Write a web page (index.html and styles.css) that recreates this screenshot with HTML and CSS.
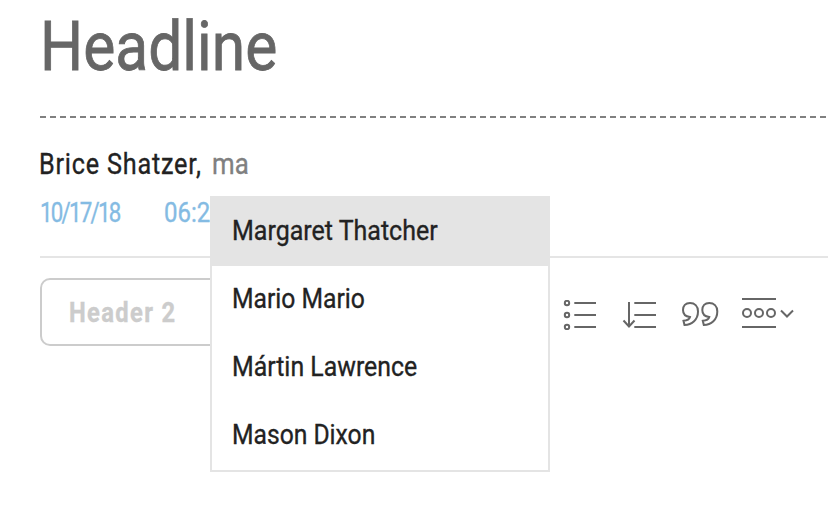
FILE: index.html
```html
<!DOCTYPE html>
<html lang="en">
<head>
<meta charset="utf-8">
<title>Article editor</title>
<link rel="stylesheet" href="styles.css">
</head>
<body>
<main class="editor">
  <h1 class="headline"><span class="text">Headline</span></h1>
  <div class="rule-dashed"></div>
  <div class="authors">
    <span class="text author">Brice Shatzer,</span>
    <span class="text query">ma</span>
    <ul class="menu">
      <li class="item active"><span class="text margaret">Margaret Thatcher</span></li>
      <li class="item"><span class="text mario">Mario Mario</span></li>
      <li class="item"><span class="text martin">Mártin Lawrence</span></li>
      <li class="item"><span class="text mason">Mason Dixon</span></li>
    </ul>
  </div>
  <div class="published"><span class="text date">10/17/18</span><span class="text time">06:28</span></div>
  <div class="toolbar">
    <div class="select"><span class="text style-name">Header 2</span></div>
    <div class="tools">
      <svg class="list" width="34" height="30" viewBox="563 300 34 30"><circle cx="567" cy="303" r="2.2"/><circle cx="567" cy="315" r="2.2"/><circle cx="567" cy="327" r="2.2"/><path d="M574.3 303H596M574.3 315H596M574.3 327H596"/></svg>
      <svg class="sort" width="36" height="30" viewBox="622 300 36 30"><path d="M634.3 303H656M634.3 315H656M634.3 327H656M629 302V327M623.5 320.5L629 326.500L634.5 320.500"/></svg>
      <svg class="quote" width="40" height="30" viewBox="680 300 40 30"><path id="q" d="M690 303C685.500 303 683 306 683 310C683 314 685.500 316.500 690 317C689.500 319 687 320.500 683.500 320.800L684.500 325C692 325 698 319.500 698 311.500C698 306 694.500 303 690 303Z"/><use href="#q" x="19.300"/></svg>
      <svg class="more" width="54" height="32" viewBox="741 297 54 32"><path d="M742 299H776M742 327H776M781 310.500L787 316.500L793 310.500"/><circle cx="747" cy="313" r="4"/><circle cx="759" cy="313" r="4"/><circle cx="771" cy="313" r="4"/></svg>
    </div>
  </div>
</main>
</body>
</html>
```
FILE: styles.css
```css
* { box-sizing: border-box; }
body {
  min-height: 100vh;
  margin: 0;
  background: #fff;
  color: #222;
  font-family: Roboto, "Liberation Sans", sans-serif;
}
.editor { min-height: 100vh; padding-left: 40px; overflow: hidden; }
.text {
  display: inline-block;
  white-space: nowrap;
  transform-origin: 0 50%;
  -webkit-text-stroke: .35px currentColor;
}
.headline {
  height: 116px;
  margin: 0;
  padding-top: 1px;
  font-size: 69px;
  font-weight: 400;
  line-height: 92px;
  color: #666;
}
.headline .text {
  transform: scaleX(.877);
  -webkit-text-stroke-width: .8px;
}
.rule-dashed {
  height: 2px;
  background: repeating-linear-gradient(90deg, #808080 0 6px, transparent 6px 10px);
}
.authors {
  position: relative;
  display: flex;
  height: 72px;
  padding-top: 22px;
  font-size: 29px;
  line-height: 48px;
}
.author { width: 172px; margin-left: -1px; letter-spacing: .900px; transform: scaleX(.87); }
.query { margin-left: 1px; color: #808080; transform: scaleX(.89); }
.menu {
  position: absolute;
  z-index: 2;
  top: 78px;
  left: 170px;
  width: 340px;
  height: 276px;
  margin: 0;
  padding: 0;
  border: 2px solid #e4e4e4;
  background: #fff;
  list-style: none;
  font-size: 28.500px;
}
.item { height: 68px; padding-left: 20px; line-height: 66px; }
.margaret { transform: scaleX(.877); }
.mario { transform: scaleX(.866); }
.martin { transform: scaleX(.872); }
.mason { transform: scaleX(.865); }
.active { background: #e4e4e4; }
.published {
  display: flex;
  height: 68px;
  border-bottom: 2px solid #e5e5e5;
  color: #84bbe3;
  font-size: 27px;
  line-height: 46px;
}
.date { width: 124px; letter-spacing: -2.100px; transform: scaleX(.825); }
.time { transform: scaleX(.89); }
.toolbar { display: flex; padding-top: 20px; }
.select {
  width: 240px;
  height: 68px;
  padding-left: 27px;
  border: 2px solid #ccc;
  border-radius: 10px;
  color: #ccc;
  font-size: 27px;
  font-weight: 700;
  line-height: 67px;
}
.style-name { letter-spacing: 1.500px; transform: scaleX(.88); }
.tools { display: flex; align-items: flex-start; padding: 22px 0 0 283px; }
.tools svg {
  flex: none;
  fill: none;
  stroke: #666;
  stroke-width: 2;
}
.sort { margin-left: 25px; }
.quote { margin-left: 22px; }
.more { margin: -3px 0 0 21px; }
```
